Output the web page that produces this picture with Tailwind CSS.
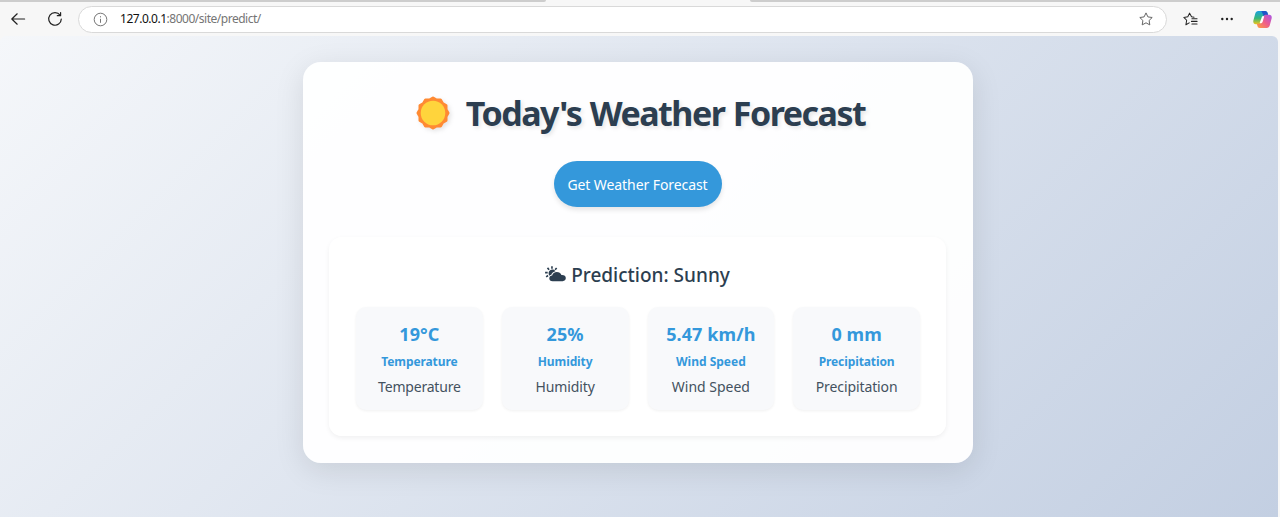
<!DOCTYPE html>
<html lang="en">
<head>
<meta charset="utf-8">
<title>Weather Forecast</title>
<script src="https://cdn.jsdelivr.net/npm/@tailwindcss/browser@4"></script>
</head>
<body class="w-[1280px] h-[517px] overflow-hidden bg-[#f7f7f7] flex flex-col font-['Noto_Sans','Open_Sans',sans-serif] text-[#2c3e50]">
  <!-- Tab strip edge -->
  <div class="h-[2px] shrink-0 flex justify-between">
    <div class="w-[546px] bg-[#cdcdcd] rounded-br-[4px]"></div>
    <div class="w-[530px] bg-[#cdcdcd] rounded-bl-[4px]"></div>
  </div>
  <!-- Toolbar -->
  <header class="h-[33px] shrink-0 flex items-center pt-px">
    <svg class="ml-[10px] size-4" viewBox="0 0 16 16" fill="none" stroke="#222" stroke-width="1.2" stroke-linecap="round" stroke-linejoin="round"><path d="M14.6 8H2M7.2 2.8L1.8 8l5.4 5.2"/></svg>
    <svg class="ml-[21px] size-4" viewBox="0 0 16 16" fill="none" stroke="#222" stroke-width="1.2" stroke-linecap="round" stroke-linejoin="round"><path d="M13.1 4.2A6.3 6.3 0 1 0 14.3 8M13.6 1.5v3.2h-3.3"/></svg>
    <div class="ml-[15px] w-[1089px] h-[27px] rounded-full border border-[#d9d9d9] bg-white flex items-center">
      <svg class="ml-[14px] size-[15px]" viewBox="0 0 15 15" fill="none" stroke="#777"><circle cx="7.5" cy="7.5" r="6.3"/><path d="M7.500 6.800v4M7.500 4.200v1.200"/></svg>
      <span class="ml-[12px] text-[12px] leading-4 tracking-[-0.48px] text-[#757575] whitespace-nowrap"><span class="text-[#111]">127.0.0.1</span>:8000/site/predict/</span>
      <svg class="ml-auto mr-[13px] size-[14px]" viewBox="0 0 14 14" fill="none" stroke="#666" stroke-linejoin="round"><path d="M7 .9l1.900 4 4.300.6-3.100 3 .7 4.400L7 10.800l-3.800 2.100.7-4.400-3.100-3 4.300-.6z"/></svg>
    </div>
    <svg class="ml-[16px] size-[15px]" viewBox="0 0 16 16" fill="none" stroke="#222" stroke-width="1.1" stroke-linejoin="round" stroke-linecap="round"><path d="M11.800 5.500l-2.700-.4L7 1.200 5.100 5.100.9 5.800l3 3-.8 4.800L6.600 11.600M9.500 7.200h5.500M9 10h6M9.500 12.800h5.500"/></svg>
    <svg class="ml-[22px] w-[14px] h-1" viewBox="0 0 14 4" fill="#222"><circle cx="2.300" cy="2" r="1.200"/><circle cx="7" cy="2" r="1.200"/><circle cx="11.700" cy="2" r="1.200"/></svg>
    <svg class="ml-[19px] size-[19px]" viewBox="0 0 20 20">
      <defs>
        <linearGradient id="ca" x1="0" y1="0" x2="0" y2="1"><stop offset="0" stop-color="#1a9fe0"/><stop offset=".55" stop-color="#35b779"/><stop offset="1" stop-color="#f0c419"/></linearGradient>
        <linearGradient id="cb" x1="1" y1="0" x2="0" y2="1"><stop offset="0" stop-color="#a955e8"/><stop offset=".5" stop-color="#ee5c8c"/><stop offset="1" stop-color="#ffa13b"/></linearGradient>
      </defs>
      <path fill="url(#ca)" d="M5.500 1h7.300c1.500 0 2.200 1 2.600 2.400L16 5.500h-2.800c-1.400 0-2.200.8-2.600 2L8.800 13c-.5 1.300-1.100 2-2.500 2H3C.8 15-.1 13.200.4 11l2-7.400C2.900 1.900 3.900 1 5.500 1z"/>
      <path fill="#1f55c8" d="M8.800 1h4c1.500 0 2.200 1 2.600 2.400L16 5.500h-2.800c-.8 0-1.400.2-1.900.7z"/>
      <path fill="url(#cb)" d="M14.500 19H7.200c-1.500 0-2.200-1-2.600-2.400L4 14.500h2.800c1.400 0 2.200-.8 2.600-2L11.200 7c.5-1.300 1.100-2 2.500-2H17c2.200 0 3.100 1.800 2.600 4l-2 7.400c-.5 1.700-1.500 2.600-3.100 2.600z"/>
      <path fill="#fff" d="M9.600 6.600h2.200L10.400 11.500c-.5 1.500-1 2.300-2.100 2.300H7z"/>
    </svg>
  </header>
  <!-- Page -->
  <main class="mt-px w-[1278px] flex-1 rounded-t-[6px] bg-linear-135 from-[#f5f7fa] to-[#c3cfe2] pt-[26px] pl-[303px]">
    <section class="w-[670px] h-[401px] rounded-[18px] bg-white/95 shadow-[0_7px_30px_rgba(0,0,0,0.1)] pr-[27px] pl-[26px] pt-[26px] flex flex-col items-center">
      <h1 class="h-[50px] pl-[6px] flex items-center whitespace-nowrap text-[34px] font-bold tracking-[-1.5px] [word-spacing:1px] [text-shadow:2px_2px_4px_rgba(0,0,0,0.1)]">
        <svg class="size-[34px] mr-[16px] drop-shadow-[2px_2px_2px_rgba(0,0,0,0.1)]" viewBox="-17 -17 34 34" stroke-linejoin="round"><path fill="#ff8a33" stroke="#ff8a33" stroke-width="3" d="M0-15L3.500-13 7.500-13 9.500-9.500 13-7.500 13-3.500 15 0 13 3.500 13 7.500 9.500 9.500 7.500 13 3.500 13 0 15-3.500 13-7.500 13-9.500 9.500-13 7.500-13 3.500-15 0-13-3.500-13-7.500-9.500-9.500-7.500-13-3.500-13z"/><circle r="12.300" fill="#ffd43c"/></svg>
        <span>Today's Weather Forecast</span>
      </h1>
      <button class="mt-[23px] w-[168px] h-[46px] rounded-full bg-[#3498db] text-white text-[14px] tracking-[-0.08px] whitespace-nowrap shadow-[0_3px_5px_rgba(0,0,0,0.1)]">Get Weather Forecast</button>
      <div class="mt-[30px] w-[617px] h-[199px] rounded-[13px] bg-white/90 shadow-[0_2px_5px_rgba(0,0,0,0.06)] px-[26px] pt-[25px]">
        <h2 class="h-[26px] flex items-center justify-center gap-[5px] text-[19px] font-medium whitespace-nowrap">
          <svg class="w-[21px] h-[16px] mb-[2px]" viewBox="0 0 22 16" fill="#2c3e50"><path d="M8 15.500c-2.300 0-3.500-1.300-3.500-2.900 0-1.600 1.200-2.800 3-2.900C8 7.300 10 6 12.300 6c2.400 0 4.200 1.300 4.900 3.100 2.700-.3 4.600 1.100 4.600 3.200 0 1.800-1.300 3.200-3.300 3.200z"/><path d="M4.600 9.800C2.900 7.500 4 3.600 7.600 3.400c1.500 0 2.700.7 3.400 1.800C8.800 5.800 7.200 7 6.600 8.900c-.8.2-1.400.5-2 .9z"/><path d="M7.300 0v2.400M2.600 1.600l1.700 2M.1 6.500h2.700M12.200 1.600l-1.600 2M1.200 11l2-1.400" stroke="#2c3e50" stroke-width="1.700"/></svg>
          <span>Prediction: Sunny</span>
        </h2>
        <div class="mt-[19px] ml-px grid grid-cols-4 gap-[19px] text-center whitespace-nowrap">
          <div class="h-[103px] rounded-[10px] bg-[#f8f9fb] shadow-[0_1px_3px_rgba(0,0,0,0.06)] pt-[14px]"><div class="text-[18px] leading-[26px] font-bold tracking-[0.1px] text-[#3498db]">19°C</div><div class="mt-[5px] text-[12px] leading-[20px] font-bold tracking-[-0.1px] text-[#3498db]">Temperature</div><div class="mt-[3px] text-[14px] leading-[24px] tracking-[-0.2px] text-[#44525f]">Temperature</div></div>
          <div class="h-[103px] rounded-[10px] bg-[#f8f9fb] shadow-[0_1px_3px_rgba(0,0,0,0.06)] pt-[14px]"><div class="text-[18px] leading-[26px] font-bold tracking-[0.1px] text-[#3498db]">25%</div><div class="mt-[5px] text-[12px] leading-[20px] font-bold tracking-[-0.1px] text-[#3498db]">Humidity</div><div class="mt-[3px] text-[14px] leading-[24px] tracking-[-0.1px] text-[#44525f]">Humidity</div></div>
          <div class="h-[103px] rounded-[10px] bg-[#f8f9fb] shadow-[0_1px_3px_rgba(0,0,0,0.06)] pt-[14px]"><div class="text-[18px] leading-[26px] font-bold tracking-[0.1px] text-[#3498db]">5.47 km/h</div><div class="mt-[5px] text-[12px] leading-[20px] font-bold text-[#3498db]">Wind Speed</div><div class="mt-[3px] text-[14px] leading-[24px] text-[#44525f]">Wind Speed</div></div>
          <div class="h-[103px] rounded-[10px] bg-[#f8f9fb] shadow-[0_1px_3px_rgba(0,0,0,0.06)] pt-[14px]"><div class="text-[18px] leading-[26px] font-bold tracking-[0.1px] text-[#3498db]">0 mm</div><div class="mt-[5px] text-[12px] leading-[20px] font-bold tracking-[-0.1px] text-[#3498db]">Precipitation</div><div class="mt-[3px] text-[14px] leading-[24px] tracking-[-0.1px] text-[#44525f]">Precipitation</div></div>
        </div>
      </div>
    </section>
  </main>
</body>
</html>
